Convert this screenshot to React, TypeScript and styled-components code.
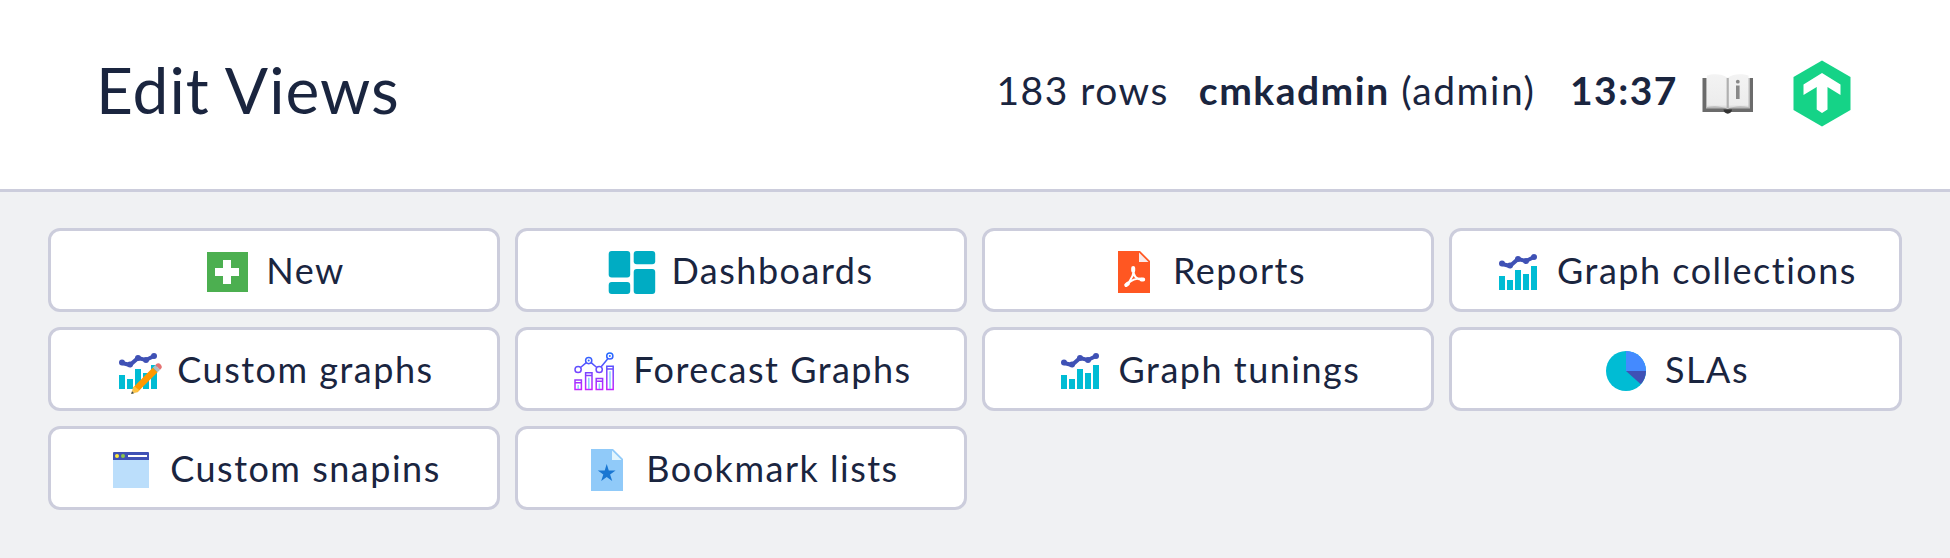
import React from 'react';
import styled, { createGlobalStyle } from 'styled-components';

const GlobalStyle = createGlobalStyle`
  body {
    margin: 0;
    background: #f0f1f3;
    color: #1a253f;
    font-family: Lato, 'Liberation Sans', sans-serif;
  }
`;

const Page = styled.div`
  min-height: 558px;
`;

const Header = styled.header`
  box-sizing: border-box;
  height: 192px;
  padding: 0 99px 2px 96px;
  display: flex;
  align-items: center;
  justify-content: space-between;
  background: #fff;
  border-bottom: 3px solid #cccddc;
`;

const Title = styled.h1`
  margin: 0 0 8px;
  font-size: 64px;
  line-height: 78px;
  font-weight: 400;
  letter-spacing: 1px;
  white-space: nowrap;
`;

const Status = styled.div`
  display: flex;
  align-items: center;
  font-size: 39px;
  line-height: 48px;
  letter-spacing: 1.5px;
  white-space: nowrap;
`;

const StatusText = styled.span<{ $gap: number; $bold?: boolean }>`
  margin: 0 ${(p) => p.$gap}px 8px 0;
  font-weight: ${(p) => (p.$bold ? 700 : 400)};
`;

const BookSlot = styled.span`
  display: flex;
  margin: 0 39px 0 0;
`;

const Grid = styled.nav`
  display: grid;
  grid-template-columns: 452px 452px 452px 453px;
  grid-auto-rows: 84px;
  gap: 15px;
  padding: 36px 48px 48px;
`;

const Button = styled.a`
  box-sizing: border-box;
  display: flex;
  align-items: center;
  justify-content: center;
  gap: 15px;
  background: #fff;
  border: 3px solid #cccddc;
  border-radius: 12px;
  font-size: 36px;
  line-height: 44px;
  letter-spacing: 1.5px;
  white-space: nowrap;
`;

const Icon = styled.svg.attrs({ viewBox: '0 0 48 48' })`
  width: 48px;
  height: 48px;
  flex: none;
  margin-top: 4px;
`;

const Label = styled.span``;

const Book = () => (
  <svg width="52" height="42" viewBox="0 0 52 42">
    <defs>
      <linearGradient id="page" x1="0" y1="0" x2="0" y2="1">
        <stop offset="0" stopColor="#f3f3f3" />
        <stop offset=".88" stopColor="#ececec" />
        <stop offset="1" stopColor="#c9c9c9" />
      </linearGradient>
    </defs>
    <path d="M.5 5h50.500v34h-50.500z" fill="#6b6b6b" />
    <path d="M4 5h44v30.500h-44z" fill="#b9b9b9" />
    <path d="M21.500 36.500h8.500c0 5.500-8.500 5.500-8.500 0z" fill="#333" />
    <path d="M5 2.500C11 .5 20 .5 25.700 4.800 31 .5 40 .5 46.500 2.500V34c-7-1.500-16-1-20.800 2C20 33 12 32.500 5 34z" fill="url(#page)" />
    <path d="M25.700 5v30" stroke="#b0b0b0" strokeWidth="2.200" />
    <circle cx="35.800" cy="8.700" r="1.900" fill="#888" />
    <path d="M35.800 12.500V26" stroke="#888" strokeWidth="3.600" />
  </svg>
);

const Logo = () => (
  <svg width="58" height="67" viewBox="0 0 58 67">
    <path d="M29 .5 57.500 17v33L29 66.500.5 50V17z" fill="#15d387" />
    <path d="M29 13 47.500 24.500V35L34.500 27V49.500L29 53 23.700 49.500V27L10.500 35V24.500z" fill="#fff" />
  </svg>
);

const AddIcon = () => (
  <Icon>
    <path fill="#4caf50" d="M4 4h41v40H4z" />
    <path fill="#fff" d="M20 12h8v8h8v8h-8v8h-8v-8h-8v-8h8z" />
  </Icon>
);

const DashboardIcon = () => (
  <Icon>
    <g fill="#00acc3">
      <rect x=".7" y="3" width="21.500" height="26.500" rx="3" />
      <rect x=".7" y="34" width="21.500" height="12" rx="3" />
      <rect x="25.700" y="3" width="21.500" height="13.300" rx="3" />
      <rect x="25.700" y="21" width="21.500" height="25" rx="3" />
    </g>
  </Icon>
);

const ReportIcon = () => (
  <Icon>
    <path fill="#ff5722" d="M40 45H8V3h22l10 10z" />
    <path fill="#fbe9e7" d="M38.500 14H29V4.500z" />
    <g fill="none" stroke="#fff" strokeLinecap="round" strokeLinejoin="round">
      <path d="M23.300 20.500c-.2 4 .3 6 2.200 8.500 2.200 2.500 4.500 2.900 7.500 2.500M23.300 20.500c.6 3 .4 5-.9 7.700-1.700 4-3.500 6.500-6.400 9M16 37.200c3-3.500 7-5.700 11-6.500 2.500-.4 4-.2 6 .8" strokeWidth="2" />
      <path d="M23.200 20v2.800M31.500 31.500h1.700M16.200 37l1.700-1.300" strokeWidth="4" />
    </g>
  </Icon>
);

const ComboChart = () => (
  <>
    <path fill="#00bcd4" d="M37 18h6v24h-6zM29 26h6v16h-6zM21 22h6v20h-6zM13 32h6v10h-6zM5 28h6v14H5z" />
    <g fill="#3f51b5">
      <circle cx="8" cy="15.500" r="3" />
      <circle cx="16" cy="17.500" r="3" />
      <circle cx="24" cy="11" r="3" />
      <circle cx="32" cy="13" r="3" />
      <circle cx="40" cy="9" r="3" />
      <path d="m39.100 7.200-7.300 3.700-8.300-2.100-8 7-7-1.700-1 3.800 9 2.300 8-7 7.700 1.900 8.700-4.300z" />
    </g>
  </>
);

const GraphIcon = () => (
  <Icon>
    <ComboChart />
  </Icon>
);

const CustomGraphIcon = () => (
  <Icon>
    <ComboChart />
    <path d="m17.200 47 1.700-6.200 4.500 4.400z" fill="#f6c75b" />
    <path d="m17.200 47 .8-2.700 2 1.900z" fill="#37474f" />
    <path d="m18.900 40.800 20-20.300 4.700 4.700-20.200 20z" fill="#ff9800" />
    <path d="m38.900 20.500 2.500-2.500 4.700 4.700-2.500 2.500z" fill="#b0bec5" />
    <path d="m41.400 18 1.200-1.200c2.400-2.300 6.900 2.200 4.600 4.700l-1.100 1.200z" fill="#e57373" />
    <path d="m18.900 40.800 1 3.400 3.500 1 2-2-5-4z" fill="#ffc03b" />
  </Icon>
);

const forecastBars = [
  { x: 5, y: 33 },
  { x: 15.6, y: 25.8 },
  { x: 26.2, y: 31.5 },
  { x: 36.8, y: 19.3 },
];

const ForecastIcon = () => (
  <Icon>
    <defs>
      <linearGradient id="forecast" gradientUnits="userSpaceOnUse" x1="0" y1="5" x2="0" y2="43">
        <stop offset="0" stopColor="#1a6dff" />
        <stop offset="1" stopColor="#c822ff" />
      </linearGradient>
    </defs>
    <g fill="none" stroke="url(#forecast)" strokeWidth="1.500">
      {forecastBars.map(({ x, y }) => (
        <React.Fragment key={x}>
          <path d={`M${x} ${y}h6.400V42.400h-6.400zM${x} ${y + 2.8}h6.400`} />
          <path d={`M${x + 3.2} ${y + 5}V42`} stroke="#6dc7ff" strokeOpacity=".8" />
        </React.Fragment>
      ))}
      <circle cx="8.100" cy="22.500" r="3.100" />
      <circle cx="18.700" cy="13.600" r="3.100" />
      <circle cx="29.200" cy="22.500" r="3.100" />
      <circle cx="39.800" cy="9" r="3.100" />
      <path d="m10.500 20.500 5.800-4.900M21.100 15.600l5.700 4.900M31 20l7-8.500" />
    </g>
    <g fill="#2f68ff">
      <circle cx="18.700" cy="13.600" r="1" />
      <circle cx="39.800" cy="9" r="1" />
    </g>
  </Icon>
);

const PieIcon = () => (
  <Icon>
    <circle cx="24" cy="24" r="20" fill="#00bcd4" />
    <path d="M24 24V4a20 20 0 0 1 20 20z" fill="#448aff" />
    <path d="M24 24h20c0 5.100-2 9.700-5.200 13.300z" fill="#3f51b5" />
  </Icon>
);

const SnapinIcon = () => (
  <Icon>
    <path fill="#bbdefb" d="M6 14h36v28H6z" />
    <path fill="#3f51b5" d="M6 14V7q0-1 1-1h34q1 0 1 1v7z" />
    <circle cx="10" cy="10" r="2" fill="#ffeb3b" />
    <circle cx="16" cy="10" r="2" fill="#8bc34a" />
    <path fill="#fff" d="M21 9h19v2H21z" />
  </Icon>
);

const BookmarkIcon = () => (
  <Icon>
    <path fill="#90caf9" d="M40 45H8V3h22l10 10z" />
    <path fill="#e1f5fe" d="M38.500 14H29V4.500z" />
    <path fill="#1976d2" d="m23.700 18 2.100 6.500h6.800l-5.500 4 2.100 6.500-5.500-4-5.500 4 2.100-6.500-5.500-4h6.900z" />
  </Icon>
);

const links: { label: string; icon: React.ComponentType }[] = [
  { label: 'New', icon: AddIcon },
  { label: 'Dashboards', icon: DashboardIcon },
  { label: 'Reports', icon: ReportIcon },
  { label: 'Graph collections', icon: GraphIcon },
  { label: 'Custom graphs', icon: CustomGraphIcon },
  { label: 'Forecast Graphs', icon: ForecastIcon },
  { label: 'Graph tunings', icon: GraphIcon },
  { label: 'SLAs', icon: PieIcon },
  { label: 'Custom snapins', icon: SnapinIcon },
  { label: 'Bookmark lists', icon: BookmarkIcon },
];

export default function App() {
  return (
    <Page>
      <GlobalStyle />
      <Header>
        <Title>Edit Views</Title>
        <Status>
          <StatusText $gap={30}>183 rows</StatusText>
          <StatusText $gap={34.5}>
            <b>cmkadmin</b> (admin)
          </StatusText>
          <StatusText $gap={24} $bold>
            13:37
          </StatusText>
          <BookSlot>
            <Book />
          </BookSlot>
          <Logo />
        </Status>
      </Header>
      <Grid>
        {links.map(({ label, icon: Glyph }) => (
          <Button key={label}>
            <Glyph />
            <Label>{label}</Label>
          </Button>
        ))}
      </Grid>
    </Page>
  );
}
